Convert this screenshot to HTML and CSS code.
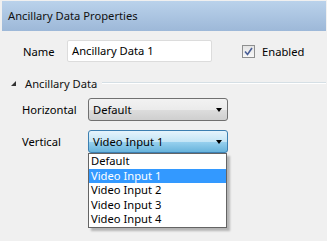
FILE: index.html
```html
<!DOCTYPE html>
<html lang="en">
<head>
    <meta charset="UTF-8">
    <title>Ancillary Data Properties</title>
    <link rel="stylesheet" href="styles.css">
</head>
<body>
    <div class="panel-header">Ancillary Data Properties</div>

    <div class="name-row">
        <span class="name-label">Name</span>
        <div class="text-box">Ancillary Data 1</div>
        <label class="check">
            <span class="check-box">
                <svg width="9" height="9" viewBox="0 0 9 9">
                    <path d="M1 4.5 L3.5 7.5 L8 1" fill="none" stroke="#4a5f97" stroke-width="1.6"/>
                </svg>
            </span>
            Enabled
        </label>
    </div>

    <div class="section">
        <span class="expander"></span>
        <span class="section-title">Ancillary Data</span>
        <span class="section-line"></span>
    </div>

    <div class="field-row">
        <span class="field-label">Horizontal</span>
        <div class="combo">
            <span class="combo-text">Default</span>
            <span class="combo-arrow"></span>
        </div>
    </div>

    <div class="field-row field-row-open">
        <span class="field-label">Vertical</span>
        <div class="combo-wrap">
            <div class="combo combo-open">
                <span class="combo-text">Video Input 1</span>
                <span class="combo-arrow"></span>
            </div>
            <ul class="drop-list">
                <li>Default</li>
                <li class="selected">Video Input 1</li>
                <li>Video Input 2</li>
                <li>Video Input 3</li>
                <li>Video Input 4</li>
            </ul>
        </div>
    </div>
</body>
</html>
```

FILE: styles.css
```css
body {
    margin: 0;
    height: 241px;
    background: #f0f0f0;
    font-family: 'Noto Sans', sans-serif;
    font-size: 11.2px;
    color: #000;
    overflow: hidden;
}

.panel-header {
    margin: 1px 1px 0 2px;
    height: 30px;
    line-height: 30px;
    padding-left: 6px;
    background: linear-gradient(#bad2eb, #9db8d8);
    color: #111;
}

/* Name row */
.name-row {
    display: flex;
    align-items: center;
    margin-top: 9px;
    height: 22px;
}

.name-label {
    margin-left: 23px;
    width: 44px;
}

.text-box {
    width: 139px;
    height: 20px;
    line-height: 20px;
    padding-left: 4px;
    background: #fff;
    border: 1px solid #dcdcdc;
    border-radius: 2px;
}

.check {
    display: flex;
    align-items: center;
    margin-left: 30px;
}

.check-box {
    width: 11px;
    height: 11px;
    border: 1px solid #8e8f8f;
    background: linear-gradient(#e4e4e4, #f8f8f8);
    margin-right: 7px;
    display: flex;
    align-items: center;
    justify-content: center;
}

/* Group header */
.section {
    display: flex;
    align-items: center;
    margin-top: 13px;
    height: 16px;
}

.expander {
    margin-left: 11px;
    width: 0;
    height: 0;
    border-left: 5px solid transparent;
    border-bottom: 5px solid #333;
    margin-right: 9px;
}

.section-title {
    color: #111;
}

.section-line {
    flex: 1;
    margin-left: 5px;
    margin-right: 1px;
    height: 0;
    border-top: 1px solid #d5dfe5;
    border-bottom: 1px solid #fff;
}

/* Combo rows */
.field-row {
    display: flex;
    align-items: center;
    margin-top: 7px;
    height: 23px;
}

.field-row-open {
    margin-top: 9px;
}

.field-label {
    margin-left: 22px;
    width: 66px;
}

.combo-wrap {
    position: relative;
}

.combo {
    box-sizing: border-box;
    width: 140px;
    height: 23px;
    display: flex;
    align-items: center;
    justify-content: space-between;
    padding: 0 5px 0 4px;
    border: 1px solid #707070;
    border-radius: 3px;
    background: linear-gradient(#f2f2f2 0%, #ebebeb 50%, #dddddd 51%, #cfcfcf 100%);
}

.combo-open {
    border-color: #3c7fb1;
    background: linear-gradient(#e5f4fc 0%, #c4e5f6 50%, #98d1ef 51%, #68b3db 100%);
}

.combo-arrow {
    width: 0;
    height: 0;
    border-left: 3.5px solid transparent;
    border-right: 3.5px solid transparent;
    border-top: 4px solid #000;
}

.drop-list {
    position: absolute;
    top: 100%;
    left: 0;
    margin: 0;
    padding: 0;
    list-style: none;
    box-sizing: border-box;
    width: 139px;
    background: #fff;
    border: 1px solid #646464;
    box-shadow: 3px 3px 2px rgba(0, 0, 0, 0.25);
}

.drop-list li {
    height: 14.5px;
    line-height: 14.5px;
    padding-left: 2px;
    overflow: hidden;
}

.drop-list li.selected {
    background: #3399ff;
    color: #fff;
}
```
